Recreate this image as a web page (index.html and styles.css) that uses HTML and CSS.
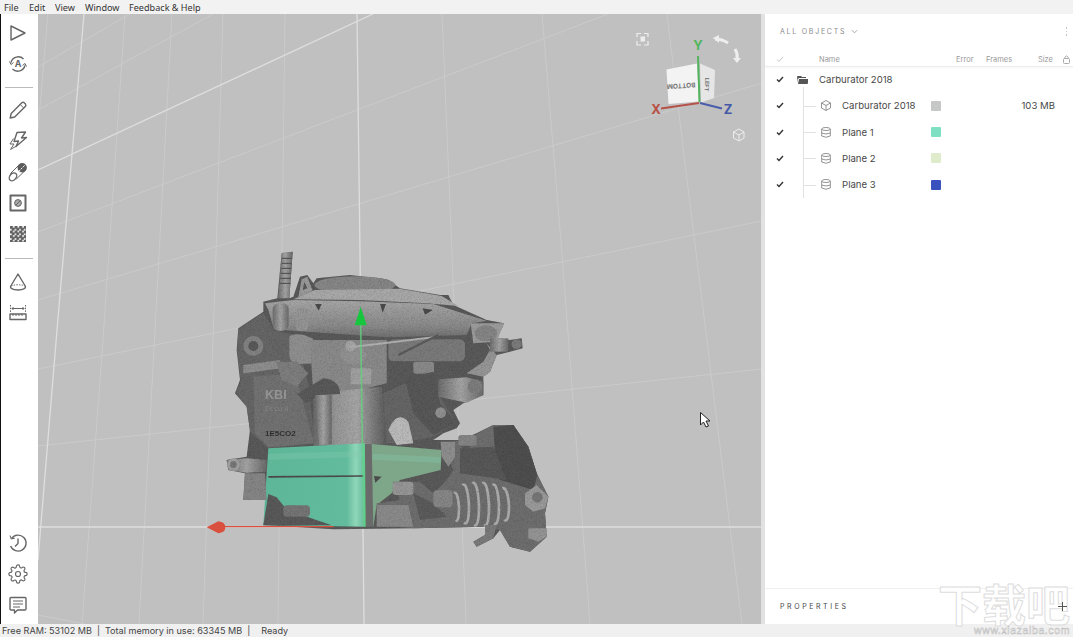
FILE: index.html
```html
<!DOCTYPE html>
<html lang="en">
<head>
    <meta charset="UTF-8">
    <title>Carburator 2018</title>
    <link rel="stylesheet" href="styles.css">
</head>
<body>
    <div class="menubar">
        <span class="menu-item m-file">File</span>
        <span class="menu-item m-edit">Edit</span>
        <span class="menu-item m-view">View</span>
        <span class="menu-item m-window">Window</span>
        <span class="menu-item">Feedback &amp; Help</span>
    </div>

    <div class="main">
        <div class="toolbar">
            <div class="tool-group">
                <div class="tool"><svg viewBox="0 0 20 20"><path d="M3 3 L17 10 L3 17 Z"/></svg></div>
                <div class="tool"><svg viewBox="0 0 20 20">
                    <path d="M3 8.5 A7.5 7.5 0 0 1 15.5 5"/><path d="M17 11.5 A7.5 7.5 0 0 1 4.5 15"/>
                    <path d="M1.5 7.5 L3 10.5 L5.5 8.5" class="thin"/><path d="M18.5 12.5 L17 9.5 L14.5 11.5" class="thin"/>
                    <text x="10" y="13.2" class="tool-letter">A</text>
                </svg></div>
            </div>
            <div class="tool-sep"></div>
            <div class="tool-group">
                <div class="tool"><svg viewBox="0 0 20 20">
                    <path d="M3.2 13.5 L13.8 2.8 Q15 1.8 16.2 2.8 L17.5 4.1 Q18.4 5.3 17.3 6.4 L6.7 17 L2.2 18 Z"/><path d="M12.2 4.5 L15.8 8" class="thin"/>
                </svg></div>
                <div class="tool"><svg viewBox="0 0 20 20">
                    <path d="M9 1.5 L17.5 1 L13.5 7 L18.5 6.5 L8 15.5 L10.5 10 L6 10.5 Z"/>
                    <path d="M5.5 7.5 L2 13 L6 13 L2.5 18.5 L8.5 15" class="thin"/>
                </svg></div>
                <div class="tool"><svg viewBox="0 0 20 20">
                    <ellipse cx="5" cy="14.8" rx="3.2" ry="4.4" transform="rotate(40 5 14.8)"/>
                    <path d="M2.2 11.8 L11.5 2.5 M8.4 17 L17.6 8" class="thin"/>
                    <circle cx="14.2" cy="5.8" r="4.7" class="solid"/>
                    <path d="M11 9.2 L17.4 2.6" class="knock"/>
                </svg></div>
                <div class="tool"><svg viewBox="0 0 20 20">
                    <rect x="2.5" y="2.5" width="15" height="15" class="heavy"/>
                    <circle cx="10" cy="10" r="3.4" class="dot"/><path d="M7.8 12.2 L12.2 7.8" class="thin"/>
                </svg></div>
                <div class="tool"><svg viewBox="0 0 20 20">
                    <defs><pattern id="check" width="4.6" height="4.6" patternUnits="userSpaceOnUse" x="2" y="2">
                        <rect width="2.3" height="2.3" fill="#555"/><rect x="2.3" y="2.3" width="2.3" height="2.3" fill="#555"/>
                    </pattern></defs>
                    <rect x="2" y="2" width="16" height="16" class="checker"/>
                </svg></div>
            </div>
            <div class="tool-sep tool-sep-low"></div>
            <div class="tool-group">
                <div class="tool"><svg viewBox="0 0 20 20">
                    <path d="M10 2 L17.5 14.5 Q18 17.5 10 18 Q2 17.5 2.5 14.5 Z"/>
                    <path d="M3 14 Q10 11.5 17 14" class="dash"/>
                </svg></div>
                <div class="tool"><svg viewBox="0 0 20 20">
                    <path d="M2.5 2 V9 M17.5 2 V9" class="dash"/><path d="M4 5.5 H16 M5.5 4 L4 5.5 L5.5 7 M14.5 4 L16 5.5 L14.5 7" class="thin"/>
                    <rect x="2" y="11" width="16" height="5.5"/><path d="M5 11 V13 M8 11 V13 M11 11 V13 M14 11 V13" class="thin"/>
                </svg></div>
            </div>
            <div class="tool-group tool-group-bottom">
                <div class="tool"><svg viewBox="0 0 20 20">
                    <path d="M3.5 5.5 A8 8 0 1 1 2.6 13"/><path d="M2 2.5 L3.2 6 L6.8 5.2" class="thin"/><path d="M10 5.5 V10.5 L7 13.5"/>
                </svg></div>
                <div class="tool"><svg viewBox="0 0 24 24">
                    <circle cx="12" cy="12" r="3"/>
                    <path d="M19.4 15a1.65 1.65 0 0 0 .33 1.82l.06.06a2 2 0 0 1 0 2.83 2 2 0 0 1-2.83 0l-.06-.06a1.65 1.65 0 0 0-1.82-.33 1.65 1.65 0 0 0-1 1.51V21a2 2 0 0 1-2 2 2 2 0 0 1-2-2v-.09A1.65 1.65 0 0 0 9 19.4a1.65 1.65 0 0 0-1.82.33l-.06.06a2 2 0 0 1-2.83 0 2 2 0 0 1 0-2.83l.06-.06a1.65 1.65 0 0 0 .33-1.82 1.65 1.65 0 0 0-1.51-1H3a2 2 0 0 1-2-2 2 2 0 0 1 2-2h.09A1.65 1.65 0 0 0 4.6 9a1.65 1.65 0 0 0-.33-1.82l-.06-.06a2 2 0 0 1 0-2.83 2 2 0 0 1 2.83 0l.06.06a1.65 1.65 0 0 0 1.82.33H9a1.65 1.65 0 0 0 1-1.51V3a2 2 0 0 1 2-2 2 2 0 0 1 2 2v.09a1.65 1.65 0 0 0 1 1.51 1.65 1.65 0 0 0 1.82-.33l.06-.06a2 2 0 0 1 2.83 0 2 2 0 0 1 0 2.83l-.06.06a1.65 1.65 0 0 0-.33 1.82V9a1.65 1.65 0 0 0 1.51 1H21a2 2 0 0 1 2 2 2 2 0 0 1-2 2h-.09a1.65 1.65 0 0 0-1.51 1z"/>
                </svg></div>
                <div class="tool"><svg viewBox="0 0 20 20">
                    <path d="M3 2.5 H17 Q18 2.5 18 3.5 V14 Q18 15 17 15 H9.5 L6.5 18 V15 H3 Q2 15 2 14 V3.5 Q2 2.5 3 2.5 Z"/>
                    <path d="M5 6 H15 M5 9 H15 M5 12 H12" class="thin"/>
                </svg></div>
            </div>
        </div>

        <div class="viewport">
            <svg class="scene" viewBox="38 14 723 610">
                <defs>
                    <linearGradient id="metal" x1="0" y1="0" x2="1" y2="0">
                        <stop offset="0" stop-color="#6e6e6e"/><stop offset=".5" stop-color="#a4a4a4"/><stop offset="1" stop-color="#6a6a6a"/>
                    </linearGradient>
                    <linearGradient id="column" x1="0" y1="0" x2="1" y2="0">
                        <stop offset="0" stop-color="#6a6a6a"/><stop offset=".3" stop-color="#969696"/><stop offset=".6" stop-color="#a6a6a6"/><stop offset=".85" stop-color="#767676"/><stop offset="1" stop-color="#5c5c5c"/>
                    </linearGradient>
                    <linearGradient id="flange" x1="0" y1="0" x2="0" y2="1">
                        <stop offset="0" stop-color="#a6a6a6"/><stop offset=".7" stop-color="#8a8a8a"/><stop offset="1" stop-color="#707070"/>
                    </linearGradient>
                    <linearGradient id="tealBand" x1="0" y1="0" x2="1" y2="0">
                        <stop offset="0" stop-color="#5db698"/><stop offset=".82" stop-color="#62bb9c"/><stop offset=".91" stop-color="#8fd6b8"/><stop offset="1" stop-color="#63ba9a"/>
                    </linearGradient>
                    <filter id="grain" x="-2%" y="-2%" width="104%" height="104%">
                        <feGaussianBlur in="SourceGraphic" stdDeviation="1.8" result="soft"/>
                        <feTurbulence type="fractalNoise" baseFrequency=".7" numOctaves="2" seed="4" result="n"/>
                        <feColorMatrix in="n" type="matrix" values="0 0 0 0 0  0 0 0 0 0  0 0 0 0 0  0 0 0 .6 -.24" result="d"/>
                        <feComposite in="d" in2="soft" operator="in" result="dots"/>
                        <feMerge><feMergeNode in="soft"/><feMergeNode in="dots"/></feMerge>
                    </filter>
                    <filter id="soften" x="-5%" y="-5%" width="110%" height="110%">
                        <feGaussianBlur stdDeviation="1.2"/>
                    </filter>
                </defs>

                <g class="grid-thin">
                    <path d="M48 14 L38 130 M125 14 L103 340 L82 624 M172 14 L155 330 L139 624 M223 14 L216 254 L203 624 M285 14 L282 254 L278 624 M442 14 L452 254 L466 624 M542 14 L562 254 L590 624 M667 14 L683 147 L742 624"/>
                    <path d="M38 67 L130 14 M38 110 L213 14 M38 232 L608 14 M38 300 L762 83 M38 369 L762 221 M38 446 L762 369 M38 615 L85 624"/>
                </g>
                <g class="grid-bold">
                    <path d="M84 14 L57 330 L38 560 M38 170 L373 14 M357 14 L360 254 L364 624"/>
                    <path d="M38 527 H761"/>
                </g>

                <g class="part" transform="translate(200 240) scale(.33333)">
                    <g filter="url(#grain)">
                        <!-- silhouette -->
                        <path fill="#5a5a5a" d="M245 40 L278 35 L268 175 L280 170 L300 110 L322 105 L340 130 L350 115 L450 105 L560 118 L600 145 L720 165 L745 165 L760 195 L860 240 L912 250 L905 268 L865 275 L870 290 L930 300 L965 295 L968 325 L930 335 L890 345 L870 395 L850 410 L850 465 L790 490 L760 510 L780 550 L770 565 L730 580 L700 600 L780 600 L830 580 L880 555 L940 555 L985 620 L1010 700 L1045 770 L1035 820 L1040 890 L990 935 L930 920 L900 870 L880 895 L830 920 L820 905 L855 885 L855 860 L640 865 L400 868 L190 855 L205 780 L130 780 L135 700 L85 690 L80 660 L140 650 L150 570 L140 500 L105 460 L120 420 L110 330 L115 265 L190 215 L190 185 L232 175 Z"/>

                        <!-- stud and rear cap -->
                        <path fill="url(#metal)" d="M247 38 L278 36 L268 175 L234 175 Z"/>
                        <path class="thread" d="M246 55 L276 55 M245 70 L275 70 M244 85 L274 85 M242 100 L273 100 M241 115 L272 115 M240 130 L271 130"/>
                        <ellipse cx="465" cy="135" rx="122" ry="26" fill="#868686"/>
                        <path fill="#9a9a9a" d="M295 172 L305 118 L322 110 L338 152 Z"/>
                        <path fill="#5a5a5a" d="M308 150 L313 125 L322 145 Z"/>

                        <!-- flange -->
                        <path fill="#a8a8a8" d="M280 178 L345 150 L600 146 L725 168 L775 198 L680 190 L480 180 Z"/>
                        <path fill="url(#flange)" d="M195 190 L280 180 L480 184 L700 192 L860 242 L815 250 L800 285 L560 292 L280 272 L222 268 L205 210 Z"/>
                        <rect x="218" y="190" width="48" height="82" rx="18" fill="url(#metal)"/>
                        <rect x="288" y="205" width="36" height="68" rx="12" fill="#949494"/>
                        <path fill="#9c9c9c" d="M812 250 L912 250 L905 268 L890 305 L820 310 Z"/>
                        <ellipse cx="858" cy="280" rx="34" ry="24" fill="#858585"/>
                        <path fill="#4c4c4c" d="M345 192 L365 192 L356 212 Z M540 192 L558 192 L548 218 Z M668 205 L698 210 L675 224 Z"/>

                        <!-- left body -->
                        <path fill="#666" d="M115 268 L190 218 L222 270 L285 285 L325 430 L345 610 L205 625 L150 575 L140 500 L108 458 L122 420 L112 330 Z"/>
                        <path fill="#727272" d="M160 410 L285 400 L342 610 L205 622 L165 580 Z"/>
                        <circle cx="160" cy="318" r="30" fill="#828282"/><circle cx="160" cy="318" r="15" fill="#5a5a5a"/>
                        <path fill="#8e8e8e" d="M130 375 L240 360 L245 385 L130 400 Z"/>
                        <text x="195" y="478" class="emboss emboss-big">KBI</text>
                        <text x="195" y="512" class="emboss">Deco 4</text>
                        <text x="195" y="588" class="emboss emboss-dark">1E5CO2</text>
                        <path fill="#8f8f8f" d="M268 292 Q270 280 310 284 L340 296 V335 L385 322 V368 L300 372 Q268 370 268 345 Z"/>
                        <path fill="#7e7e7e" d="M228 365 L290 365 L325 400 L290 440 L245 420 Z"/>

                        <!-- centre column -->
                        <path fill="#8a8a8a" d="M330 300 L560 300 L560 430 L440 460 L340 470 Z"/>
                        <path fill="url(#column)" d="M340 460 L545 440 L560 612 L340 622 Z"/>
                        <path fill="#5a5a5a" d="M292 462 L370 415 Q420 420 420 462 L360 465 L318 490 Z"/>
                        <path fill="url(#metal)" d="M345 465 L395 465 L395 612 L358 615 Z"/>
                        <rect x="452" y="385" width="62" height="48" rx="4" fill="#a0a0a0"/>
                        <ellipse cx="460" cy="345" rx="40" ry="28" fill="#929292"/>
                        <circle cx="452" cy="318" r="16" fill="#a4a4a4"/>

                        <!-- right linkage -->
                        <rect x="565" y="298" width="230" height="66" rx="16" fill="#7a7a7a"/>
                        <path class="rod" d="M450 322 L700 292"/>
                        <path class="rod rod-dark" d="M595 345 L715 285"/>
                        <rect x="640" y="365" width="62" height="36" rx="8" fill="#8a8a8a"/>
                        <path fill="#666" d="M548 460 L640 420 L700 440 L770 550 L700 590 L600 610 L560 610 Z"/>
                        <path fill="#bababa" d="M565 570 Q590 510 625 545 L640 610 L590 615 Z"/>
                        <path fill="#585858" d="M615 415 L700 395 L720 490 L770 550 L700 585 L640 520 Z"/>
                        <path fill="url(#metal)" d="M715 418 L800 412 L850 425 L850 465 L800 488 L715 470 Z"/>
                        <circle cx="825" cy="440" r="22" fill="#7e7e7e"/>
                        <circle cx="722" cy="518" r="16" fill="#909090"/>
                        <path fill="#959595" d="M800 400 L850 365 L870 330 L860 310 L890 345 L870 395 L850 410 Z"/>
                        <path fill="url(#metal)" d="M870 295 H925 V335 H870 Z"/>
                        <circle cx="950" cy="312" r="15" fill="#7c7c7c"/>
                    </g>

                    <!-- planes -->
                    <path fill="url(#tealBand)" d="M205 625 L495 610 L495 860 L190 855 Z" filter="url(#soften)"/>
                    <path fill="#6a6a6a" d="M495 612 L515 612 L522 860 L495 860 Z" filter="url(#soften)"/>
                    <path fill="#7ea688" d="M515 612 L725 630 L722 690 L600 720 L575 760 L530 795 L520 860 Z" filter="url(#soften)"/>
                    <path class="band" d="M205 650 L490 642"/>
                    <path class="band" d="M518 650 L722 660"/>

                    <g filter="url(#grain)">
                        <path fill="#5a5a5a" d="M205 762 L230 772 L258 806 L338 836 L395 856 L190 856 Z"/>
                        <rect x="250" y="796" width="80" height="34" rx="12" fill="#747474"/>
                        <path fill="#4e4e4e" d="M205 708 L490 706 L490 710 L205 713 Z M522 708 L545 710 L526 728 Z"/>
                        <path fill="#6e6e6e" d="M578 725 H660 L700 760 L740 720 L760 690 L735 635 L770 600 L800 640 L830 580 L880 555 L940 555 L985 620 L1010 700 L1045 770 L1035 820 L1040 890 L990 935 L930 920 L900 870 L855 860 L640 865 L535 855 L530 790 L600 780 Z"/>
                        <path fill="#505050" d="M880 560 L940 555 L985 620 L1012 705 L1000 750 L900 720 L885 640 Z"/>
                        <path fill="#585858" d="M780 625 L880 620 L920 720 L780 700 Z"/>
                        <path fill="#8e8e8e" d="M722 605 H765 V650 L745 680 L725 650 Z"/>
                        <rect x="775" y="585" width="55" height="32" rx="8" fill="#858585"/>
                        <path fill="#8a8a8a" d="M530 795 H625 L640 860 H530 Z"/>
                        <rect x="578" y="725" width="62" height="40" rx="10" fill="#969696"/>
                        <path fill="#5c5c5c" d="M640 760 L700 790 L740 830 L660 840 Z"/>
                        <path class="spring" d="M762 760 Q772 750 777 800 Q777 850 767 840 M787 735 Q802 725 807 795 Q807 860 792 848 M817 730 Q832 720 837 795 Q837 865 822 855 M847 730 Q862 720 867 795 Q867 865 852 855 M877 735 Q892 725 897 795 Q897 860 882 850 M907 745 Q922 740 927 795 Q927 850 912 840"/>
                        <rect x="700" y="750" width="58" height="52" rx="12" fill="#868686"/>
                        <path fill="#9a9a9a" d="M975 760 L1010 735 L1045 770 L1035 805 L1000 815 L975 795 Z"/>
                        <circle cx="1012" cy="772" r="16" fill="#777"/>
                        <path fill="#959595" d="M985 865 H1040 V890 L1015 905 L985 895 Z"/>
                        <path fill="#7a7a7a" d="M855 855 H890 L880 895 L830 920 L820 905 L855 885 Z"/>
                        <path fill="url(#metal)" d="M80 660 L140 655 L200 660 L200 695 L140 698 L85 690 Z"/>
                        <circle cx="100" cy="674" r="19" fill="#a0a0a0"/><circle cx="100" cy="674" r="10" fill="#777"/>
                        <path fill="#858585" d="M135 700 L195 700 L200 780 L130 780 Z"/>
                    </g>

                    <!-- move gizmo -->
                    <path class="axis-green" d="M482 250 L487 610"/>
                    <path class="axis-green-low" d="M490 610 L494 860"/>
                    <path fill="#16c63d" d="M482 200 L464 256 L500 256 Z"/>
                    <path class="axis-red" d="M75 860 H400"/>
                    <path fill="#d9503f" d="M20 862 L55 844 Q76 846 76 862 Q76 878 55 880 Z"/>
                </g>

                <!-- orientation cube -->
                <g class="gizmo">
                    <path class="focus" d="M637 37 V33.500 H641 M644 33.500 H648 V37 M648 41 V45 H644 M641 45 H637 V41"/>
                    <rect x="640.500" y="36.500" width="4.500" height="5" fill="#eee"/>
                    <path class="rot" d="M715 39 Q722 39 728 43"/>
                    <path fill="#eee" d="M713 38 L719 35 L719 43 Z"/>
                    <path class="rot" d="M735 49 Q738 54 737 59"/>
                    <path fill="#eee" d="M733 58 L741 58 L737 63 Z"/>
                    <path fill="#f3f3f3" d="M666.500 69.500 L697 63.500 L699 101.500 L668.500 104 Z"/>
                    <path fill="#e6e6e6" d="M700 63.500 L715 70 L714 98 L701 102.500 Z"/>
                    <text transform="translate(681 83.500) rotate(176)" class="cube-text">BOTTOM</text>
                    <text transform="translate(705 84.500) rotate(93)" class="cube-text cube-text-small">LEFT</text>
                    <path class="gizmo-y" d="M698 56 L699.500 102"/>
                    <path class="gizmo-x" d="M661 108.500 L699 103"/>
                    <path class="gizmo-z" d="M700 103 L722 108.500"/>
                    <text x="698" y="50" class="axis-letter letter-y">Y</text>
                    <text x="656" y="114" class="axis-letter letter-x">X</text>
                    <text x="728" y="114" class="axis-letter letter-z">Z</text>
                    <path class="small-cube" d="M733.500 132 L739 129 L744 132 V138 L739 141 L733.500 138 Z M733.500 132 L739 135 L744 132 M739 135 V141"/>
                </g>

                <path class="cursor" d="M700.500 412.500 V425 L703.500 422 L706 427 L708.500 426 L706 421 L710 421 Z"/>
            </svg>
        </div>

        <div class="panel">
            <div class="panel-title">
                <span class="caps caps-tight">ALL OBJECTS</span>
                <svg class="chevron" viewBox="0 0 8 5"><path d="M1 1 L4 4 L7 1"/></svg>
                <span class="kebab"><i></i><i></i><i></i></span>
            </div>
            <div class="list-head">
                <svg class="check check-off" viewBox="0 0 8 7"><path d="M1 3.500 L3 5.500 L7 1"/></svg>
                <span class="col-name">Name</span>
                <span class="col-error">Error</span>
                <span class="col-frames">Frames</span>
                <span class="col-size">Size</span>
                <svg class="lock" viewBox="0 0 7 9"><rect x=".5" y="3.500" width="6" height="5" rx="1"/><path d="M1.800 3.500 V2.200 Q3.500 -.4 5.200 2.200 V3.500"/></svg>
            </div>
            <div class="list">
                <div class="row">
                    <svg class="check" viewBox="0 0 8 7"><path d="M1 3.500 L3 5.500 L7 1"/></svg>
                    <svg class="folder" viewBox="0 0 11 8"><path d="M0 1 Q0 0 1 0 H4 L5 1 H9 V2 H2 L1 3 V7 Z"/><path d="M1 8 L2 3 H11 V7 Q11 8 10 8 Z"/></svg>
                    <span class="name-top">Carburator 2018</span>
                </div>
                <div class="row">
                    <svg class="check" viewBox="0 0 8 7"><path d="M1 3.500 L3 5.500 L7 1"/></svg>
                    <span class="branch branch-first"></span>
                    <svg class="obj-icon" viewBox="0 0 10 11"><path d="M5 .5 L9.500 3 V8 L5 10.500 L.5 8 V3 Z M.5 3 L5 5.500 L9.500 3 M5 5.500 V10.500"/></svg>
                    <span class="name">Carburator 2018</span>
                    <span class="swatch swatch-grey"></span>
                    <span class="size">103 MB</span>
                </div>
                <div class="row">
                    <svg class="check" viewBox="0 0 8 7"><path d="M1 3.500 L3 5.500 L7 1"/></svg>
                    <span class="branch"></span>
                    <svg class="obj-icon" viewBox="0 0 10 11"><ellipse cx="5" cy="2" rx="4.300" ry="1.500"/><path d="M.7 2 V9 Q5 11.500 9.300 9 V2 M.7 6 Q5 8 9.300 6"/></svg>
                    <span class="name">Plane 1</span>
                    <span class="swatch swatch-teal"></span>
                </div>
                <div class="row">
                    <svg class="check" viewBox="0 0 8 7"><path d="M1 3.500 L3 5.500 L7 1"/></svg>
                    <span class="branch"></span>
                    <svg class="obj-icon" viewBox="0 0 10 11"><ellipse cx="5" cy="2" rx="4.300" ry="1.500"/><path d="M.7 2 V9 Q5 11.500 9.300 9 V2 M.7 6 Q5 8 9.300 6"/></svg>
                    <span class="name">Plane 2</span>
                    <span class="swatch swatch-lime"></span>
                </div>
                <div class="row">
                    <svg class="check" viewBox="0 0 8 7"><path d="M1 3.500 L3 5.500 L7 1"/></svg>
                    <span class="branch"></span>
                    <svg class="obj-icon" viewBox="0 0 10 11"><ellipse cx="5" cy="2" rx="4.300" ry="1.500"/><path d="M.7 2 V9 Q5 11.500 9.300 9 V2 M.7 6 Q5 8 9.300 6"/></svg>
                    <span class="name">Plane 3</span>
                    <span class="swatch swatch-blue"></span>
                </div>
            </div>
            <div class="properties">
                <span class="caps caps-dark">PROPERTIES</span>
                <span class="plus"></span>
            </div>
        </div>
    </div>

    <div class="statusbar">
        <span>Free RAM: 53102 MB</span><span class="pipe">|</span><span>Total memory in use: 63345 MB</span><span class="pipe">|</span><span class="ready">Ready</span>
    </div>

    <div class="watermark">
        <div class="wm-big">下载吧</div>
        <div class="wm-url">www.xiazaiba.com</div>
    </div>
</body>
</html>
```

FILE: styles.css
```css
* {
    box-sizing: border-box;
}

html, body {
    margin: 0;
    height: 100%;
}

body {
    position: relative;
    display: flex;
    flex-direction: column;
    height: 637px;
    overflow: hidden;
    background: #f0f0f0;
    font-family: Inter, "Noto Sans", sans-serif;
    color: #444;
}

/* menu */
.menubar {
    display: flex;
    flex: 0 0 14px;
    align-items: center;
    padding-left: 4px;
    background: #f2f2f2;
    font-family: "Noto Sans", sans-serif;
    font-size: 9.1px;
    color: #333;
}

.m-file { width: 25px; }
.m-edit { width: 26px; }
.m-view { width: 30px; }
.m-window { width: 44px; }

.main {
    display: flex;
    flex: 1;
    min-height: 0;
}

/* left tools */
.toolbar {
    display: flex;
    flex: 0 0 38px;
    flex-direction: column;
    padding: 3.5px 0;
    background: #fff;
    border-left: 1px solid #111;
}

.tool {
    display: flex;
    align-items: center;
    justify-content: center;
    height: 31px;
    padding-right: 3px;
}

.tool svg {
    width: 20px;
    height: 20px;
    fill: none;
    stroke: #666;
    stroke-width: 1.4;
    stroke-linejoin: round;
}

.tool .thin { stroke-width: 1; }
.tool .heavy { stroke-width: 2; }
.tool .dash { stroke-width: 1; stroke-dasharray: 1.5 1.2; }
.tool .solid { fill: #5c5c5c; stroke: none; }
.tool .knock { stroke: #fff; stroke-width: 1; stroke-dasharray: 2 1; }
.tool .dot { fill: #aaa; stroke-width: 1; }
.tool .checker { fill: url(#check); stroke: none; }

.tool-letter {
    fill: #666;
    stroke: none;
    font-family: Inter, sans-serif;
    font-size: 9px;
    font-weight: 700;
    text-anchor: middle;
}

.tool-sep {
    height: 1px;
    margin: 7px 5px 7px 4px;
    background: #bbb;
}

.tool-sep-low {
    margin-top: 8px;
    margin-bottom: 8px;
}

.tool-group-bottom {
    margin-top: auto;
}

/* 3d view */
.viewport {
    flex: 0 0 723px;
    background: #c0c0c0;
}

.scene {
    display: block;
    width: 723px;
    height: 610px;
}

.grid-thin path { fill: none; stroke: #cdcdcd; stroke-width: .8; }
.grid-bold path { fill: none; stroke: #dedede; stroke-width: 1.3; }

.thread { fill: none; stroke: #4c4c4c; stroke-width: 3; }
.rod { fill: none; stroke: #b0b0b0; stroke-width: 6; }
.rod-dark { stroke: #5c5c5c; }
.spring { fill: none; stroke: #ababab; stroke-width: 8; }
.band { fill: none; stroke: #83c9ae; stroke-width: 18; opacity: .35; }

.emboss {
    fill: #858585;
    font-family: "Liberation Sans", sans-serif;
    font-size: 22px;
}

.emboss-big { fill: #989898; font-size: 38px; font-weight: 700; }
.emboss-dark { fill: #333; font-size: 24px; font-weight: 700; }

.axis-green { fill: none; stroke: #5fd67b; stroke-width: 5; opacity: .75; }
.axis-green-low { fill: none; stroke: #5cdb82; stroke-width: 9; opacity: .55; }
.axis-red { fill: none; stroke: #d9503f; stroke-width: 4; }

.focus { fill: none; stroke: #eee; stroke-width: 1.2; }
.rot { fill: none; stroke: #eee; stroke-width: 3; }

.cube-text {
    fill: #777;
    font-family: Inter, sans-serif;
    font-size: 6.5px;
    font-weight: 700;
    text-anchor: middle;
}

.cube-text-small { font-size: 5.5px; }

.gizmo-y { stroke: #52b45e; stroke-width: 2; }
.gizmo-x { stroke: #b5534a; stroke-width: 2; }
.gizmo-z { stroke: #4a5cab; stroke-width: 2; }

.axis-letter {
    font-family: Inter, sans-serif;
    font-size: 13px;
    font-weight: 700;
    text-anchor: middle;
}

.letter-y { fill: #4fb65c; }
.letter-x { fill: #b84f45; }
.letter-z { fill: #4458a8; }

.small-cube { fill: none; stroke: #eee; stroke-width: 1; }
.cursor { fill: #fff; stroke: #222; stroke-width: 1; }

/* right panel */
.panel {
    display: flex;
    flex: 1;
    flex-direction: column;
    min-width: 0;
    background: #fff;
    border-left: 4px solid #e2e2e2;
}

.panel-title {
    display: flex;
    flex: 0 0 37.5px;
    align-items: center;
    padding: 0 6px 3px 15px;
}

.caps {
    font-size: 7px;
    letter-spacing: 2.6px;
    color: #8a8a8a;
}

.caps-tight {
    letter-spacing: 1.75px;
}

.caps-dark {
    color: #444;
}

.chevron {
    width: 7px;
    height: 5px;
    margin-left: 5px;
    fill: none;
    stroke: #999;
}

.kebab {
    display: flex;
    flex-direction: column;
    gap: 2px;
    margin-left: auto;
    margin-right: 0;
}

.kebab i {
    width: 1.5px;
    height: 1.5px;
    background: #c4c4c4;
}

.list-head {
    display: flex;
    flex: 0 0 15px;
    align-items: center;
    padding: 1px 0 0 11px;
    border-bottom: 1px solid #ededed;
    box-shadow: 0 1px 2px rgba(0, 0, 0, 0.04);
    font-size: 7.5px;
    color: #9a9a9a;
}

.list-head .check { margin-right: 35px; }

.col-name { width: 137px; }
.col-error { width: 30px; }
.col-frames { flex: 1; }

.lock {
    width: 7px;
    height: 9px;
    margin: 0 3px 0 10px;
    fill: none;
    stroke: #aaa;
}

.list {
    flex: 1;
}

.row {
    display: flex;
    align-items: center;
    height: 26.25px;
    padding: 0 18px 0 11px;
    font-size: 9.6px;
    color: #484848;
}

.check {
    flex: 0 0 8px;
    height: 7px;
    margin-right: 19px;
    fill: none;
    stroke: #333;
    stroke-width: 1.4;
}

.check-off {
    stroke: #c8c8c8;
    stroke-width: 1;
}

.folder {
    width: 11px;
    height: 8px;
    margin: 0 11px 0 -6px;
    fill: #555;
}

.branch {
    position: relative;
    align-self: stretch;
    flex: 0 0 18px;
    border-left: 1px solid #e2e2e2;
}

.branch::after {
    content: "";
    position: absolute;
    top: 50%;
    left: 0;
    width: 12px;
    height: 1px;
    background: #e2e2e2;
}

.branch-first::before {
    content: "";
    position: absolute;
    top: -6px;
    left: -1px;
    width: 1px;
    height: 6px;
    background: #e2e2e2;
}

.obj-icon {
    flex: 0 0 10px;
    height: 11px;
    margin-right: 11px;
    fill: none;
    stroke: #888;
    stroke-width: .9;
}

.name {
    flex: 0 0 89px;
}

.swatch {
    width: 10px;
    height: 10px;
    border-radius: 1px;
}

.swatch-grey { background: #c6c8c8; }
.swatch-teal { background: #7fdfc3; }
.swatch-lime { background: #dfeccb; }
.swatch-blue { background: #3a52bd; }

.size {
    flex: 1;
    text-align: right;
}

.properties {
    display: flex;
    flex: 0 0 36px;
    align-items: center;
    justify-content: space-between;
    padding: 0 6px 0 15px;
    border-top: 1px solid #f0f0f0;
}

.plus {
    position: relative;
    z-index: 2;
    width: 9px;
    height: 9px;
    background:
        linear-gradient(#555, #555) center / 9px 1px no-repeat,
        linear-gradient(#555, #555) center / 1px 9px no-repeat;
}

/* status */
.statusbar {
    display: flex;
    flex: 0 0 13px;
    align-items: center;
    padding-left: 2px;
    background: #f0f0f0;
    font-size: 9.1px;
    color: #444;
}

.pipe { margin: 0 5px; }
.ready { margin-left: 6px; }

/* site stamp over the corner */
.watermark {
    position: absolute;
    right: 3px;
    bottom: 2px;
    width: 134px;
    font-family: "Noto Sans CJK SC", sans-serif;
    text-align: right;
    white-space: nowrap;
    pointer-events: none;
}

.wm-big {
    font-size: 44px;
    line-height: 45px;
    font-weight: 700;
    color: #fff;
    -webkit-text-stroke: 1px #ddd;
}

.wm-url {
    font-family: "Liberation Sans", sans-serif;
    font-size: 10.5px;
    line-height: 9px;
    letter-spacing: .6px;
    color: #fff;
    -webkit-text-stroke: .5px #bbb;
}
```
